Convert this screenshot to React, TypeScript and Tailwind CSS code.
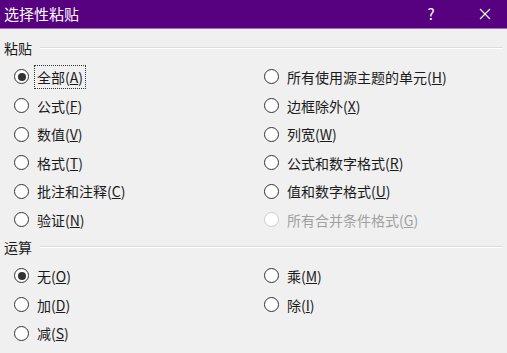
import React from "react";

const FONT = '"Microsoft YaHei", "Noto Sans CJK SC", "Noto Sans", sans-serif';

type Opt = { label: string; key: string; checked?: boolean; disabled?: boolean; focus?: boolean };

function Radio({ checked, disabled }: { checked?: boolean; disabled?: boolean }) {
  return (
    <span
      className={
        "size-[15px] rounded-full border flex items-center justify-center shrink-0 bg-white " +
        (disabled ? "border-[#cccccc]" : "border-[#333333]")
      }
    >
      {checked && <span className="size-[8px] rounded-full bg-[#333333]" />}
    </span>
  );
}

function Option({ o }: { o: Opt }) {
  return (
    <div className="h-[28.6px] flex items-center gap-[6px]">
      <Radio checked={o.checked} disabled={o.disabled} />
      <span
        className={
          "text-[14px] leading-[20px] px-[2px] py-[1px] " +
          (o.focus ? "outline-1 outline-dotted outline-[#333] " : "") +
          (o.disabled ? "text-[#a0a0a0]" : "text-[#1a1a1a]")
        }
      >
        {o.label}(<span className="underline underline-offset-1">{o.key}</span>)
      </span>
    </div>
  );
}

function Section({ title }: { title: string }) {
  return (
    <div className="h-[20px] flex items-center gap-[8px] pl-[4px] pr-[4px]">
      <span className="text-[14px] leading-[20px] text-[#1a1a1a]">{title}</span>
      <span className="flex-1 h-[2px] border-t border-[#dcdcdc] border-b-white border-b" />
    </div>
  );
}

const paste: Opt[] = [
  { label: "全部", key: "A", checked: true, focus: true },
  { label: "所有使用源主题的单元", key: "H" },
  { label: "公式", key: "F" },
  { label: "边框除外", key: "X" },
  { label: "数值", key: "V" },
  { label: "列宽", key: "W" },
  { label: "格式", key: "T" },
  { label: "公式和数字格式", key: "R" },
  { label: "批注和注释", key: "C" },
  { label: "值和数字格式", key: "U" },
  { label: "验证", key: "N" },
  { label: "所有合并条件格式", key: "G", disabled: true },
];

const ops: Opt[] = [
  { label: "无", key: "O", checked: true },
  { label: "乘", key: "M" },
  { label: "加", key: "D" },
  { label: "除", key: "I" },
  { label: "减", key: "S" },
];

export default function App() {
  return (
    <div className="w-[507px] h-[353px] bg-[#f0f0f0] overflow-hidden" style={{ fontFamily: FONT }}>
      <header className="h-[29px] bg-[#570080] border-b border-[#9a6fb5] flex items-center pl-[4px] pr-[16px] text-white">
        <span className="text-[15px] flex-1">选择性粘贴</span>
        <span className="text-[15px] w-[12px] mr-[42px] text-center">?</span>
        <svg width="12" height="12" viewBox="0 0 12 12" className="mb-[1px]">
          <path d="M1 1 L11 11 M11 1 L1 11" stroke="white" strokeWidth="1.1" />
        </svg>
      </header>
      <div className="pt-[9px]">
        <Section title="粘贴" />
        <div className="grid grid-cols-[250px_1fr] pl-[14px] mt-[4.7px]">
          {paste.map((o) => (
            <Option key={o.key} o={o} />
          ))}
        </div>
        <div className="mt-[2.7px]">
          <Section title="运算" />
        </div>
        <div className="grid grid-cols-[250px_1fr] pl-[14px] mt-[4.7px]">
          {ops.map((o) => (
            <Option key={o.key} o={o} />
          ))}
        </div>
      </div>
    </div>
  );
}
